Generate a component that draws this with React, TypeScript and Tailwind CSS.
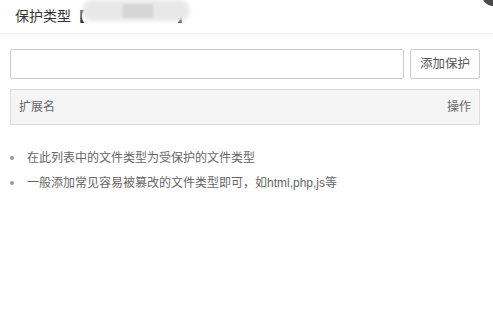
import React from "react";

const tips = [
  "在此列表中的文件类型为受保护的文件类型",
  "一般添加常见容易被篡改的文件类型即可，如html,php,js等",
];

const App = () => {
  return (
    <div
      className="relative w-[493px] h-[331px] overflow-hidden bg-white text-[#333]"
      style={{ fontFamily: '"Liberation Sans", "Noto Sans CJK SC", sans-serif' }}
    >
      {/* close button peeking in */}
      <div className="absolute -right-[14px] -top-[20px] w-[26px] h-[26px] rounded-full bg-[#4a4a4a]" />

      <div className="h-[34px] border-b border-[#eee] flex items-center pl-[15px] text-[14px]">
        <span>保护类型【</span>
        <span className="relative inline-flex items-center">
          <span className="inline-block w-[92px]" />
          <span>】</span>
          <span className="absolute -left-[3px] top-[-6px] w-[108px] h-[21px] rounded-full bg-[#e8e8e8] blur-[2px]" />
          <span className="absolute left-[38px] top-[-2px] w-[30px] h-[14px] bg-[#d6d6d6] blur-[1px]" />
        </span>
      </div>

      <div className="pl-[10px] pr-[13px] pt-[15px]">
        <div className="flex gap-[6px] h-[30px]">
          <input
            type="text"
            className="flex-1 h-full border border-[#ccc] rounded-[2px] outline-none px-2 text-[12px]"
          />
          <button className="w-[70px] h-full border border-[#ccc] rounded-[2px] bg-white text-[12.5px] text-[#555]">
            添加保护
          </button>
        </div>

        <div className="mt-[10px] h-[36px] border border-[#ddd] bg-[#f5f5f5] flex items-center justify-between px-[8px] text-[12px] text-[#666]">
          <span>扩展名</span>
          <span>操作</span>
        </div>

        <ul className="mt-[25px] flex flex-col gap-[9px] text-[12px] text-[#666]">
          {tips.map((tip) => (
            <li key={tip} className="flex items-center h-[16px]">
              <span className="w-[4px] h-[4px] rounded-full bg-[#999] mr-[13px]" />
              {tip}
            </li>
          ))}
        </ul>
      </div>
    </div>
  );
};

export default App;
